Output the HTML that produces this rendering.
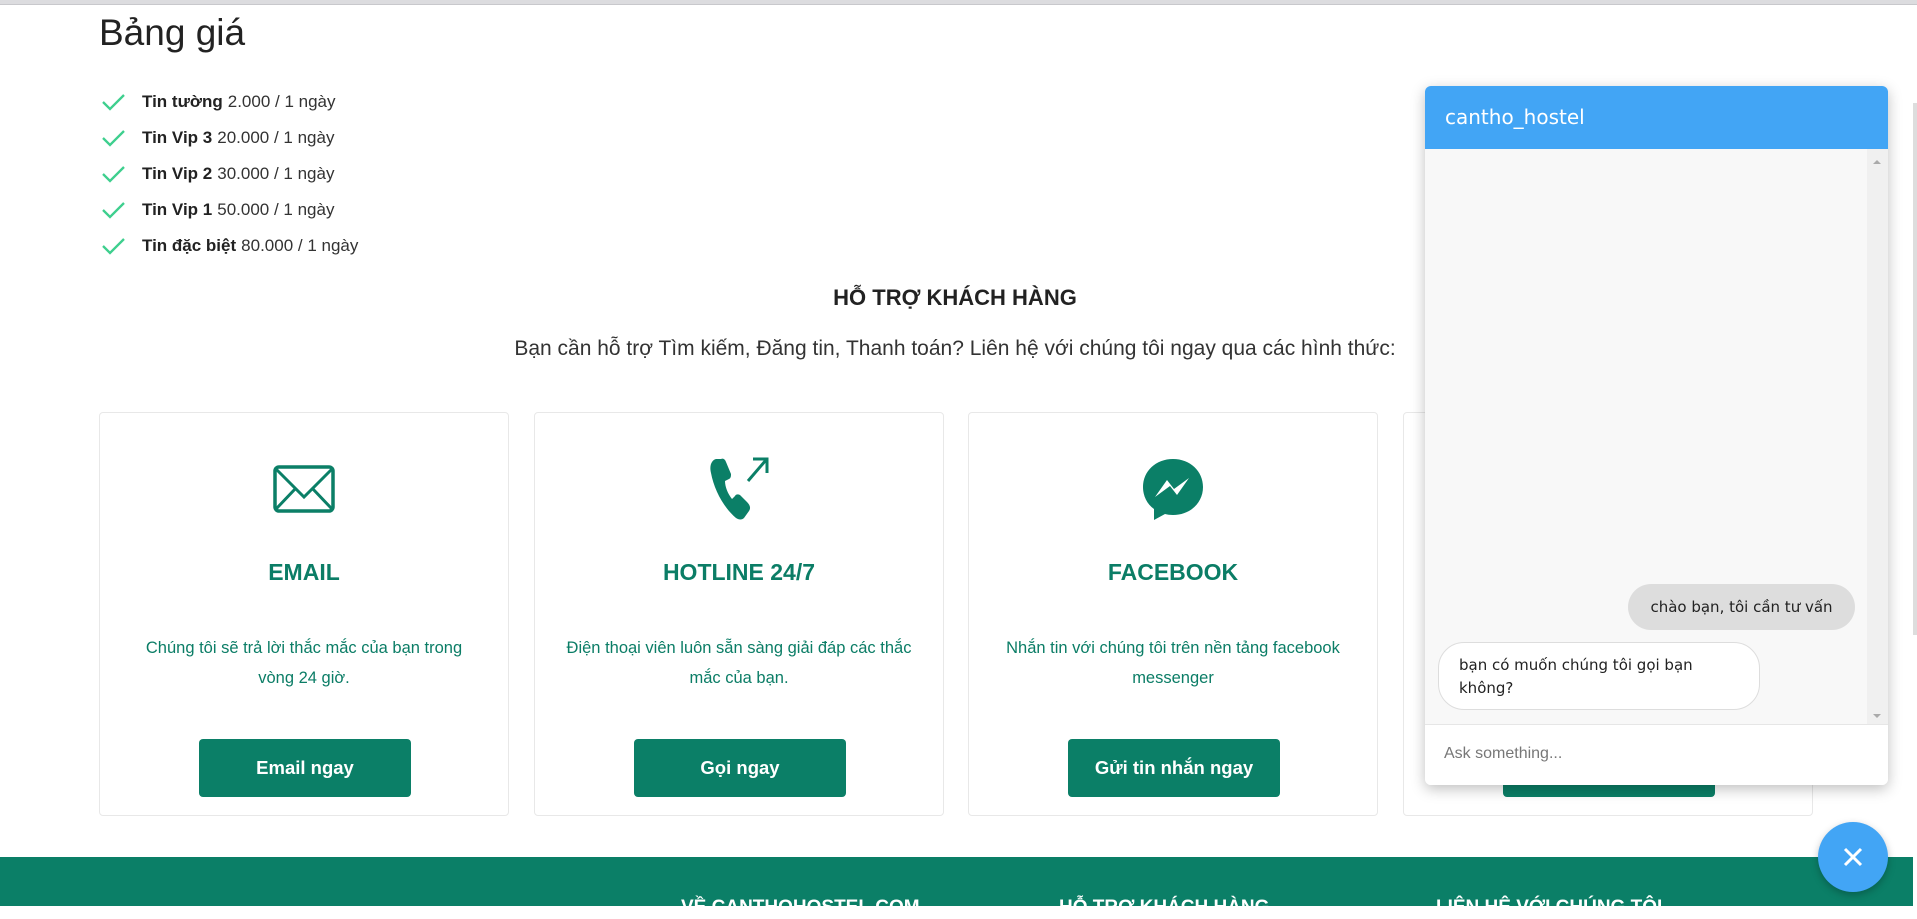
<!DOCTYPE html>
<html><head><meta charset="utf-8"><style>
*{box-sizing:border-box;margin:0;padding:0}
body{width:1917px;height:906px;overflow:hidden;background:#fff;font-family:"Liberation Sans",Arial,sans-serif;color:#222;position:relative}
.topbar{position:absolute;left:0;top:0;width:1917px;height:5px;background:#dcdcdf;border-bottom:1px solid #c8c8cc}
h1{position:absolute;left:99px;top:12px;font-size:37px;font-weight:400;color:#222}
.list{position:absolute;left:101px;top:84px}
.list div{height:36px;font-size:17px;display:flex;align-items:center;color:#333}
.list svg{margin-right:16px}
.list b{color:#222;margin-right:5px}
.h2{position:absolute;left:0;width:1910px;text-align:center;top:285px;font-size:22px;font-weight:700;color:#222}
.sub{position:absolute;left:0;width:1910px;text-align:center;top:337px;font-size:21px;color:#333}
.card{position:absolute;top:412px;width:410px;height:404px;border:1px solid #e8e8e8;border-radius:4px;text-align:center;color:#0b7d66}
.card .ic{position:absolute;left:0;right:0;top:41px;height:70px;display:flex;justify-content:center;align-items:center}
.card .t{position:absolute;left:0;right:0;top:146px;font-size:23px;font-weight:700}
.card .d{position:absolute;left:30px;right:30px;top:220px;font-size:16.5px;line-height:30px}
.card .b{position:absolute;left:99px;top:326px;width:212px;height:58px;background:#0b7f67;color:#fff;border-radius:4px;font-size:18.5px;font-weight:700;line-height:58px}
.footer{position:absolute;left:0;top:857px;width:1913px;height:49px;background:#0b7f67}
.footer span{position:absolute;top:40px;color:#fff;font-weight:700;font-size:19px}
.pscroll{position:absolute;left:1913px;top:103px;width:4px;height:532px;background:#ddd}
.chat{position:absolute;left:1425px;top:86px;width:463px;height:699px;border-radius:6px;box-shadow:0 4px 14px rgba(0,0,0,.25);background:#f8f8f8;overflow:hidden;font-family:"DejaVu Sans",Verdana,sans-serif}
.chat .hd{height:63px;background:#42a5f5;color:#fff;font-size:20px;padding:19px 0 0 20px}
.chat .sb{position:absolute;right:0;top:63px;width:21px;height:575px;background:#f0f0f0}
.chat .in{position:absolute;left:0;bottom:0;width:100%;height:61px;background:#fff;border-top:1px solid #e6e6e6;color:#777;font-size:16px;padding:20px 0 0 19px;font-family:"Liberation Sans",Arial,sans-serif}
.bub1{position:absolute;left:203px;top:498px;width:227px;height:46px;background:#ddd;border-radius:23px;font-size:15px;line-height:46px;text-align:center;color:#222}
.bub2{position:absolute;left:13px;top:556px;width:322px;height:68px;background:#fff;border:1px solid #ddd;border-radius:26px;font-size:15px;line-height:23px;padding:11px 20px;color:#222}
.close{position:absolute;left:1818px;top:822px;width:70px;height:70px;border-radius:50%;background:#42a5f5;box-shadow:0 3px 8px rgba(0,0,0,.25)}
</style></head><body>
<div class="topbar"></div>
<h1>Bảng giá</h1>
<div class="list">
<div><svg width="25" height="20" viewBox="0 0 25 20"><path d="M2 10l7 7L23 3" fill="none" stroke="#3ecf8e" stroke-width="2.3"/></svg><b>Tin tường</b>2.000 / 1 ngày</div>
<div><svg width="25" height="20" viewBox="0 0 25 20"><path d="M2 10l7 7L23 3" fill="none" stroke="#3ecf8e" stroke-width="2.3"/></svg><b>Tin Vip 3</b>20.000 / 1 ngày</div>
<div><svg width="25" height="20" viewBox="0 0 25 20"><path d="M2 10l7 7L23 3" fill="none" stroke="#3ecf8e" stroke-width="2.3"/></svg><b>Tin Vip 2</b>30.000 / 1 ngày</div>
<div><svg width="25" height="20" viewBox="0 0 25 20"><path d="M2 10l7 7L23 3" fill="none" stroke="#3ecf8e" stroke-width="2.3"/></svg><b>Tin Vip 1</b>50.000 / 1 ngày</div>
<div><svg width="25" height="20" viewBox="0 0 25 20"><path d="M2 10l7 7L23 3" fill="none" stroke="#3ecf8e" stroke-width="2.3"/></svg><b>Tin đặc biệt</b>80.000 / 1 ngày</div>
</div>
<div class="h2">HỖ TRỢ KHÁCH HÀNG</div>
<div class="sub">Bạn cần hỗ trợ Tìm kiếm, Đăng tin, Thanh toán? Liên hệ với chúng tôi ngay qua các hình thức:</div>

<div class="card" style="left:99px"><div class="ic"><svg width="62" height="48" viewBox="0 0 62 48"><rect x="2" y="2" width="58" height="44" rx="4" fill="none" stroke="#0b7f67" stroke-width="3.5"/><path d="M3 4l28 28L59 4M3 44l20-21M59 44L39 23" fill="none" stroke="#0b7f67" stroke-width="3"/></svg></div><div class="t">EMAIL</div><div class="d">Chúng tôi sẽ trả lời thắc mắc của bạn trong vòng 24 giờ.</div><div class="b">Email ngay</div></div>

<div class="card" style="left:534px"><div class="ic"><svg width="66" height="64" viewBox="0 0 66 64"><path d="M10 2c-4 1-7 6-5 14 3 16 12 34 25 45 3 2 6 2 8 0l5-7c2-3 1-6-2-9l-7-7c-2-1-4-1-5 1l-3 3c-4-5-7-12-7-18l4-2c2-1 2-3 2-5l-5-12c-1-3-3-4-5-3z" fill="#0b7f67"/><path d="M42 24L60 3M47 2h14v14" fill="none" stroke="#0b7f67" stroke-width="3"/></svg></div><div class="t">HOTLINE 24/7</div><div class="d">Điện thoại viên luôn sẵn sàng giải đáp các thắc mắc của bạn.</div><div class="b">Gọi ngay</div></div>

<div class="card" style="left:968px"><div class="ic"><svg width="64" height="64" viewBox="0 0 64 64"><path d="M32 2C15 2 2 14 2 30c0 9 4 17 11 22v11l11-6c2 .5 5 1 8 1 17 0 30-12 30-28S49 2 32 2z" fill="#0b7f67"/><path d="M14 40l12-17 7 9 15-11-12 17-7-9z" fill="#fff"/></svg></div><div class="t">FACEBOOK</div><div class="d">Nhắn tin với chúng tôi trên nền tảng facebook messenger</div><div class="b">Gửi tin nhắn ngay</div></div>

<div class="card" style="left:1403px"><div class="b"></div></div>

<div class="footer"><span style="left:681px">VỀ CANTHOHOSTEL.COM</span><span style="left:1059px">HỖ TRỢ KHÁCH HÀNG</span><span style="left:1436px">LIÊN HỆ VỚI CHÚNG TÔI</span></div>
<div class="pscroll"></div>

<div class="chat">
<div class="hd">cantho_hostel</div>
<div class="sb"><svg width="21" height="575" viewBox="0 0 21 575"><path d="M6 15l4-4 4 4z" fill="#aaa"/><path d="M6 565l4 4 4-4z" fill="#aaa"/></svg></div>
<div class="bub1">chào bạn, tôi cần tư vấn</div>
<div class="bub2">bạn có muốn chúng tôi gọi bạn không?</div>
<div class="in">Ask something...</div>
</div>
<div class="close"><svg width="70" height="70" viewBox="0 0 70 70"><path d="M27 27l16 16M43 27L27 43" stroke="#fff" stroke-width="3"/></svg></div>
</body></html>
